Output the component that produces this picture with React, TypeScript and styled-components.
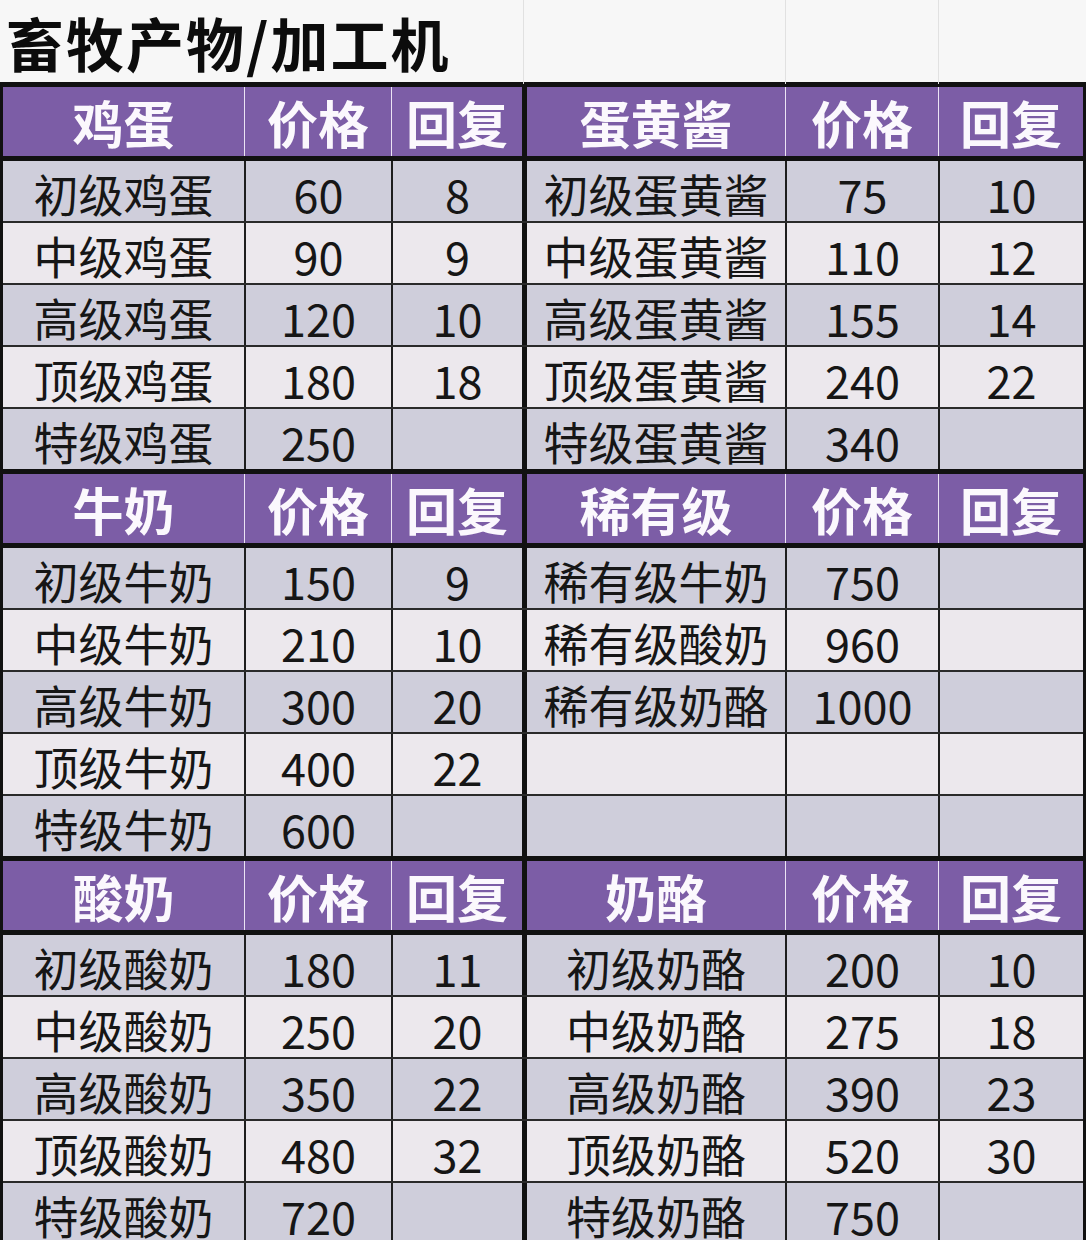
import styled, { createGlobalStyle } from 'styled-components';

const GlobalStyle = createGlobalStyle`
    html, body {
        margin: 0;
        padding: 0;
        overflow: hidden;
        background: #f7f7f7;
    }
    body {
        font-family: 'Noto Sans CJK SC', 'Noto Sans', sans-serif;
        color: #161616;
    }
`;

const COLUMNS = '241px 147px 131px 263px 153px 145px';

const Page = styled.div`
    width: 1086px;
    height: 1240px;
    overflow: hidden;
    background: #f7f7f7;
`;

const TitleRow = styled.div`
    display: grid;
    grid-template-columns: 523px 262px 153px 148px;
    height: 82px;
`;

const TitleCell = styled.div<{ $line?: boolean }>`
    display: flex;
    align-items: center;
    padding-left: 6px;
    font-size: 58px;
    font-weight: 700;
    color: #0c0c0c;
    letter-spacing: 2px;
    border-left: ${(p) => (p.$line ? '1.5px solid #e1e1e1' : 'none')};
`;

const Sheet = styled.div`
    border-left: 3px solid #111;
    border-right: 3px solid #111;
`;

const Section = styled.div`
    border-top: 5px solid #111;
`;

const HeadRow = styled.div`
    display: grid;
    grid-template-columns: ${COLUMNS};
    height: 74px;
    background: #7c5da6;
    border-bottom: 5px solid #111;
    box-sizing: border-box;
`;

const DataRow = styled.div<{ $shade: boolean; $first: boolean }>`
    display: grid;
    grid-template-columns: ${COLUMNS};
    height: ${(p) => (p.$first ? '60px' : '62px')};
    box-sizing: border-box;
    background: ${(p) => (p.$shade ? '#cfcedb' : '#ece8ed')};
    border-top: ${(p) => (p.$first ? 'none' : '2px solid #2a2a2a')};
`;

const HeadCell = styled.div<{ $edge: 'none' | 'thin' | 'split' }>`
    display: flex;
    align-items: center;
    justify-content: center;
    box-sizing: border-box;
    font-size: 51px;
    font-weight: 700;
    color: #fbf8fd;
    line-height: 1;
    padding-top: 2px;
    border-left: ${(p) =>
        p.$edge === 'split' ? '5px solid #111' : p.$edge === 'thin' ? '1.5px solid #ece4f4' : 'none'};
`;

const Cell = styled.div<{ $edge: 'none' | 'thin' | 'split' }>`
    display: flex;
    align-items: center;
    justify-content: center;
    box-sizing: border-box;
    font-size: 45px;
    font-weight: 400;
    color: #161616;
    line-height: 1;
    padding-top: 4px;
    border-left: ${(p) =>
        p.$edge === 'split' ? '5px solid #111' : p.$edge === 'thin' ? '2px solid #1e1e1e' : 'none'};
`;

type Item = [string, string, string];

interface Block {
    left: string;
    right: string;
    leftRows: Item[];
    rightRows: Item[];
}

const blocks: Block[] = [
    {
        left: '鸡蛋',
        right: '蛋黄酱',
        leftRows: [
            ['初级鸡蛋', '60', '8'],
            ['中级鸡蛋', '90', '9'],
            ['高级鸡蛋', '120', '10'],
            ['顶级鸡蛋', '180', '18'],
            ['特级鸡蛋', '250', '']
        ],
        rightRows: [
            ['初级蛋黄酱', '75', '10'],
            ['中级蛋黄酱', '110', '12'],
            ['高级蛋黄酱', '155', '14'],
            ['顶级蛋黄酱', '240', '22'],
            ['特级蛋黄酱', '340', '']
        ]
    },
    {
        left: '牛奶',
        right: '稀有级',
        leftRows: [
            ['初级牛奶', '150', '9'],
            ['中级牛奶', '210', '10'],
            ['高级牛奶', '300', '20'],
            ['顶级牛奶', '400', '22'],
            ['特级牛奶', '600', '']
        ],
        rightRows: [
            ['稀有级牛奶', '750', ''],
            ['稀有级酸奶', '960', ''],
            ['稀有级奶酪', '1000', ''],
            ['', '', ''],
            ['', '', '']
        ]
    },
    {
        left: '酸奶',
        right: '奶酪',
        leftRows: [
            ['初级酸奶', '180', '11'],
            ['中级酸奶', '250', '20'],
            ['高级酸奶', '350', '22'],
            ['顶级酸奶', '480', '32'],
            ['特级酸奶', '720', '']
        ],
        rightRows: [
            ['初级奶酪', '200', '10'],
            ['中级奶酪', '275', '18'],
            ['高级奶酪', '390', '23'],
            ['顶级奶酪', '520', '30'],
            ['特级奶酪', '750', '']
        ]
    }
];

const edges: ('none' | 'thin' | 'split')[] = ['none', 'thin', 'thin', 'split', 'thin', 'thin'];

export default function App() {
    return (
        <Page>
            <GlobalStyle />
            <TitleRow>
                <TitleCell>畜牧产物/加工机</TitleCell>
                <TitleCell $line />
                <TitleCell $line />
                <TitleCell $line />
            </TitleRow>
            <Sheet>
                {blocks.map((block) => {
                    const heads = [block.left, '价格', '回复', block.right, '价格', '回复'];
                    return (
                        <Section key={block.left}>
                            <HeadRow>
                                {heads.map((text, i) => (
                                    <HeadCell key={i} $edge={edges[i]}>
                                        {text}
                                    </HeadCell>
                                ))}
                            </HeadRow>
                            {block.leftRows.map((row, r) => {
                                const cells = [...row, ...block.rightRows[r]];
                                return (
                                    <DataRow key={r} $shade={r % 2 === 0} $first={r === 0}>
                                        {cells.map((text, i) => (
                                            <Cell key={i} $edge={edges[i]}>
                                                {text}
                                            </Cell>
                                        ))}
                                    </DataRow>
                                );
                            })}
                        </Section>
                    );
                })}
            </Sheet>
        </Page>
    );
}
